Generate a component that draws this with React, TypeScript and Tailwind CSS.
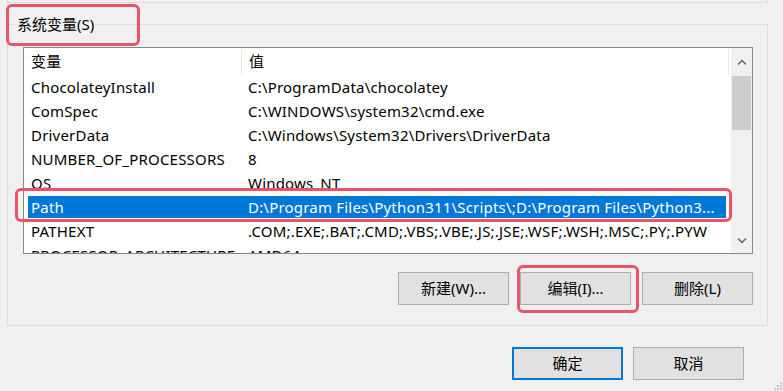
import React from "react";

const rows: [string, string][] = [
  ["ChocolateyInstall", "C:\\ProgramData\\chocolatey"],
  ["ComSpec", "C:\\WINDOWS\\system32\\cmd.exe"],
  ["DriverData", "C:\\Windows\\System32\\Drivers\\DriverData"],
  ["NUMBER_OF_PROCESSORS", "8"],
  ["OS", "Windows_NT"],
  ["Path", "D:\\Program Files\\Python311\\Scripts\\;D:\\Program Files\\Python3..."],
  ["PATHEXT", ".COM;.EXE;.BAT;.CMD;.VBS;.VBE;.JS;.JSE;.WSF;.WSH;.MSC;.PY;.PYW"],
  ["PROCESSOR_ARCHITECTURE", "AMD64"],
];

function WinButton({ label, primary }: { label: string; primary?: boolean }) {
  return (
    <button
      className={
        "w-[111px] h-[33px] bg-[#e1e1e1] text-[15px] text-black flex items-center justify-center " +
        (primary ? "border-2 border-[#0078d7]" : "border border-[#adadad]")
      }
    >
      {label}
    </button>
  );
}

function Chevron({ up }: { up?: boolean }) {
  return (
    <svg width="10" height="6" viewBox="0 0 10 6" className="text-[#606060]">
      <path
        d={up ? "M1 5.5 L5 1.5 L9 5.5" : "M1 0.5 L5 4.5 L9 0.5"}
        fill="none"
        stroke="currentColor"
        strokeWidth="1.4"
      />
    </svg>
  );
}

export default function App() {
  return (
    <div
      className="relative w-[783px] h-[391px] overflow-hidden bg-[#f0f0f0] text-black"
      style={{ fontFamily: '"Noto Sans", "Noto Sans CJK SC", sans-serif' }}
    >
      {/* bottom edge of the user variables group */}
      <div className="ml-[7px] w-[761px] h-[3px] border-x border-b border-[#dcdcdc]" />

      {/* system variables group */}
      <div className="relative mt-[21px] ml-[7px] w-[761px] h-[302px] border border-[#dcdcdc] pl-[15px] pt-[22px]">
        <div className="absolute left-[8px] top-[-13px] px-[1px] bg-[#f0f0f0] text-[15px] leading-[24px]">
          系统变量(S)
        </div>

        <div className="w-[730px] h-[207px] border border-[#828790] bg-white flex overflow-hidden">
          <div className="flex-1 flex flex-col text-[15px] tracking-[0.2px]">
            <div className="h-[27px] shrink-0 flex items-center relative">
              <div className="w-[217px] pl-[7px]">变量</div>
              <div className="pl-[7px] border-l border-[#e5e5e5] h-[25px] flex items-center">值</div>
              <div className="absolute left-[704px] top-[1px] h-[25px] border-l border-[#e5e5e5]" />
            </div>
            {rows.map(([name, value]) => {
              const sel = name === "Path";
              return (
                <div key={name} className="h-[24px] shrink-0 flex">
                  <div
                    className={
                      "flex-1 flex items-center ml-[4px] mr-[5px] whitespace-nowrap overflow-hidden " +
                      (sel ? "bg-[#0078d7] text-white my-[1px]" : "")
                    }
                  >
                    <div className="w-[213px] shrink-0 pl-[3px]">{name}</div>
                    <div className="pl-[7px]">{value}</div>
                  </div>
                </div>
              );
            })}
          </div>
          <div className="w-[21px] shrink-0 bg-[#f0f0f0] flex flex-col items-center">
            <div className="h-[28px] flex items-center justify-center">
              <Chevron up />
            </div>
            <div className="w-[19px] h-[54px] bg-[#cdcdcd]" />
            <div className="flex-1" />
            <div className="h-[24px] flex items-center justify-center">
              <Chevron />
            </div>
          </div>
        </div>

        <div className="mt-[18px] w-[730px] flex justify-end gap-[11px]">
          <WinButton label="新建(W)..." />
          <WinButton label="编辑(I)..." />
          <WinButton label="删除(L)" />
        </div>
      </div>

      <div className="mt-[21px] flex justify-end gap-[10px] pr-[39px]">
        <WinButton label="确定" primary />
        <WinButton label="取消" />
      </div>

      {/* size grip */}
      <svg className="absolute right-[1px] bottom-[1px]" width="8" height="8" viewBox="0 0 8 8">
        <rect x="6" y="0" width="2" height="2" fill="#c4c4c4" />
        <rect x="3" y="3" width="2" height="2" fill="#c4c4c4" />
        <rect x="6" y="3" width="2" height="2" fill="#c4c4c4" />
        <rect x="0" y="6" width="2" height="2" fill="#c4c4c4" />
        <rect x="3" y="6" width="2" height="2" fill="#c4c4c4" />
        <rect x="6" y="6" width="2" height="2" fill="#c4c4c4" />
      </svg>

      {/* red annotation boxes */}
      <div className="absolute left-[6px] top-[4px] w-[134px] h-[42px] border-[3px] border-[#ea5468] rounded-[6px]" />
      <div className="absolute left-[15px] top-[188px] w-[717px] h-[34px] border-[3px] border-[#ea5468] rounded-[6px]" />
      <div className="absolute left-[517px] top-[265px] w-[122px] h-[48px] border-[3px] border-[#ea5468] rounded-[6px]" />
    </div>
  );
}
